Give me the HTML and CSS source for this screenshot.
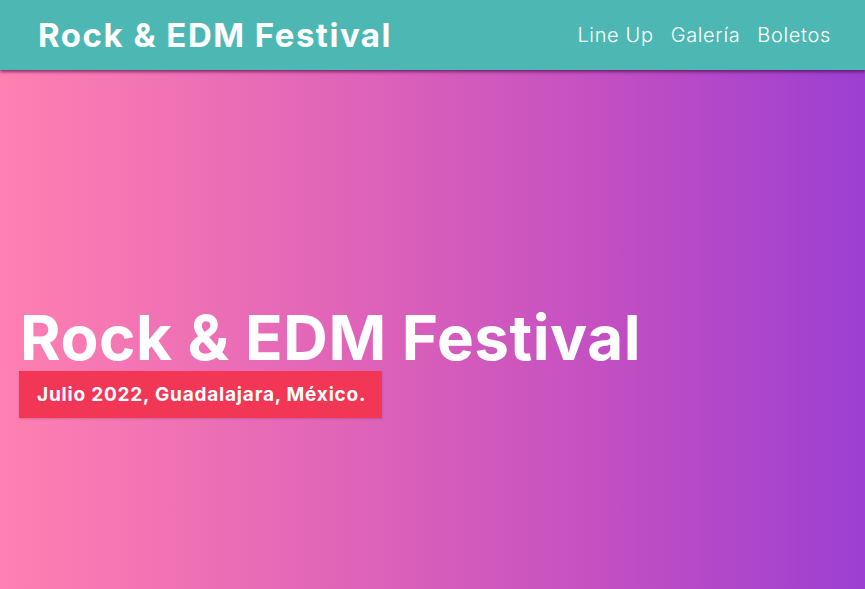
FILE: index.html
```html
<!DOCTYPE html>
<html lang="es">
<head>
<meta charset="utf-8">
<title>Rock &amp; EDM Festival</title>
<link rel="stylesheet" href="styles.css">
</head>
<body>
<header class="site-header">
  <h1 class="brand">Rock &amp; EDM Festival</h1>
  <nav class="nav">
    <a href="#" class="nav-link">Line Up</a>
    <a href="#" class="nav-link">Galería</a>
    <a href="#" class="nav-link">Boletos</a>
  </nav>
</header>
<main class="hero">
  <div class="hero-content">
    <h2 class="hero-title">Rock &amp; EDM Festival</h2>
    <p class="hero-date">Julio 2022, Guadalajara, México.</p>
  </div>
</main>
</body>
</html>
```
FILE: styles.css
```css
* { box-sizing: border-box; }
html, body { margin: 0; padding: 0; height: 100%; }
body {
  font-family: Inter, "Open Sans", sans-serif;
  overflow: hidden;
}
.site-header {
  position: relative;
  z-index: 2;
  height: 70px;
  background: #4db8b3;
  display: flex;
  align-items: center;
  justify-content: space-between;
  padding: 0 34px 0 38px;
  box-shadow: 0 2px 3px rgba(60, 0, 60, 0.6);
}
.brand {
  margin: 0;
  color: #fff;
  font-size: 33px;
  font-weight: 700;
  letter-spacing: 1.5px;
}
.nav { display: flex; gap: 17px; }
.nav-link {
  color: #fff;
  text-decoration: none;
  font-size: 20px;
  font-weight: 300;
  letter-spacing: 0.65px;
}
.hero {
  height: calc(100% - 70px);
  background: linear-gradient(to right, #ff80b1, #e064b8 40%, #c34fc2 70%, #9c3fd2);
  padding: 237px 0 0 19px;
}
.hero-title {
  margin: 0;
  color: #fff;
  font-size: 62px;
  font-weight: 700;
  line-height: 1;
  padding-left: 1px;
  letter-spacing: 0.5px;
}
.hero-date {
  display: inline-block;
  margin: 2px 0 0;
  background: #f23656;
  color: #fff;
  font-size: 19px;
  font-weight: 700;
  letter-spacing: 0.8px;
  padding: 12px 16px 12px 18px;
  box-shadow: 0 1px 2px rgba(0,0,0,0.15);
}
```
